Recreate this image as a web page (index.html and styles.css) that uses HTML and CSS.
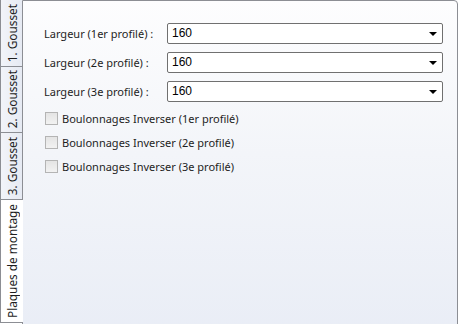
FILE: index.html
```html
<!DOCTYPE html>
<html lang="fr">
<head>
    <meta charset="UTF-8">
    <title>Plaques de montage</title>
    <link rel="stylesheet" href="styles.css">
</head>
<body>
    <div class="window">
        <nav class="tabs">
            <div class="tab t1"><span>1. Gousset</span></div>
            <div class="tab t2"><span>2. Gousset</span></div>
            <div class="tab t3"><span>3. Gousset</span></div>
            <div class="tab t4 active"><span>Plaques de montage</span></div>
        </nav>
        <section class="panel">
            <div class="row">
                <label>Largeur (1er profilé) :</label>
                <div class="combo">160<span class="arrow"></span></div>
            </div>
            <div class="row">
                <label>Largeur (2e profilé) :</label>
                <div class="combo">160<span class="arrow"></span></div>
            </div>
            <div class="row">
                <label>Largeur (3e profilé) :</label>
                <div class="combo">160<span class="arrow"></span></div>
            </div>
            <div class="checks">
                <div class="check"><span class="box"></span>Boulonnages Inverser (1er profilé)</div>
                <div class="check"><span class="box"></span>Boulonnages Inverser (2e profilé)</div>
                <div class="check"><span class="box"></span>Boulonnages Inverser (3e profilé)</div>
            </div>
        </section>
    </div>
</body>
</html>
```

FILE: styles.css
```css
body {
    margin: 0;
    font-family: "Noto Sans", "Open Sans", sans-serif;
    font-size: 11px;
    color: #1e1e1e;
    background: #fff;
}
.window {
    display: flex;
    width: 458px;
    height: 324px;
    overflow: hidden;
}
.tabs {
    display: flex;
    flex-direction: column;
    width: 22px;
    flex: none;
}
.tab {
    box-sizing: border-box;
    width: 22px;
    border: 1px solid #8c8e94;
    border-right: none;
    border-top: none;
    background: linear-gradient(to right, #f2f4f9, #e6eaf3);
    display: flex;
    align-items: center;
    justify-content: center;
}
.tab span {
    writing-mode: vertical-rl;
    transform: rotate(180deg);
    white-space: nowrap;
    line-height: 20px;
    font-size: 11.8px;
}
.t1 { height: 67px; border-top: none; }
.t2 { height: 66px; }
.t3 { height: 67px; }
.t4 { height: 123px; }
.tab.active {
    background: #fff;
    width: 23px;
    position: relative;
    z-index: 1;
}
.panel {
    flex: 1;
    box-sizing: border-box;
    height: 340px;
    border: 1px solid #8c8e94;
    border-top-right-radius: 4px;
    background: linear-gradient(to bottom, #fdfdfe 0%, #f3f5f9 45%, #e9edf6 100%);
    padding: 22px 14px 0 21px;
}
.row {
    display: flex;
    align-items: center;
    height: 21px;
    margin-bottom: 8px;
}
.row label {
    width: 123px;
    flex: none;
}
.combo {
    position: relative;
    box-sizing: border-box;
    flex: 1;
    height: 21px;
    border: 1px solid #707070;
    border-radius: 2px;
    background: #fff;
    padding-left: 4px;
    line-height: 19px;
    font-family: "Liberation Sans", Arial, sans-serif;
    font-size: 12px;
    color: #000;
}
.arrow {
    position: absolute;
    right: 5px;
    top: 8px;
    border-left: 4px solid transparent;
    border-right: 4px solid transparent;
    border-top: 4px solid #000;
}
.checks {
    margin-top: 5px;
}
.check {
    display: flex;
    align-items: center;
    height: 16px;
    margin-bottom: 8px;
}
.box {
    box-sizing: border-box;
    width: 13px;
    height: 13px;
    border: 1px solid #b4b4b4;
    background: linear-gradient(to bottom, #e4e4e4, #f2f2f2);
    margin: 0 4px 0 1px;
}
```
